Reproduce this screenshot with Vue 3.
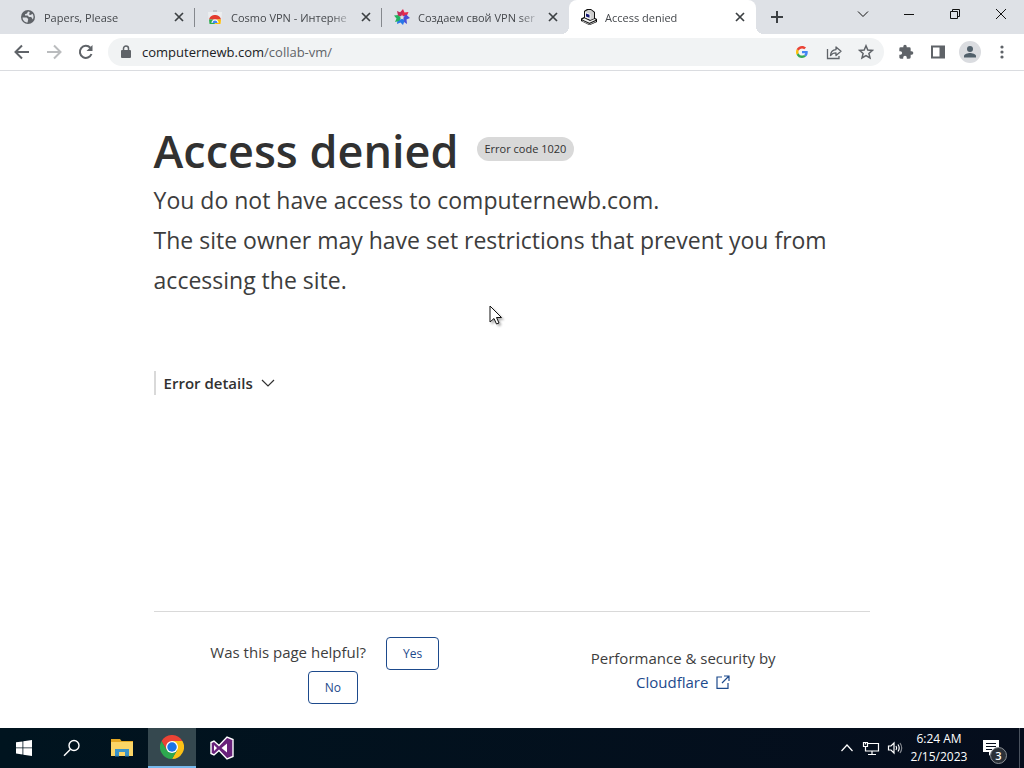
<script setup>
import { ref } from 'vue'

const tabs = [
  { id: 1, title: 'Papers, Please', icon: 'globe' },
  { id: 2, title: 'Cosmo VPN - Интерне', icon: 'store' },
  { id: 3, title: 'Создаем свой VPN ser', icon: 'star' },
  { id: 4, title: 'Access denied', icon: 'computer' }
]

const activeTab = ref(4)
const url = ref('computernewb.com/collab-vm/')
</script>

<template>
  <div class="desktop">
    <div class="browser">
      <!-- Tab strip -->
      <div class="tab-strip">
        <div
          v-for="t in tabs"
          :key="t.id"
          class="tab"
          :class="{ active: activeTab === t.id, last: t.id === 3 }"
          @click="activeTab = t.id"
        >
          <svg v-if="t.icon === 'globe'" class="favicon" viewBox="0 0 16 16">
            <circle cx="8" cy="8" r="7" fill="#5f6368" />
            <path d="M2.600 8.600h4l1.600 1.400-.6 3.600c-2.800 0-5-2.200-5-5zM8 2.500 7 4.400l-2 .8v1.400h2.600L9 8h2.200l1 1.600.6.800c.4-.8.7-1.500.7-2.400 0-1.200-.4-2.400-1-3.200L10.600 6 9 5.400l.8-2.400z" fill="#dee1e6" />
          </svg>
          <svg v-else-if="t.icon === 'store'" class="favicon" viewBox="0 0 16 16">
            <path d="M1 3h14l-1 12H2z" fill="#eceef0" />
            <path d="M6 2h4" stroke="#a5a8ac" />
            <path d="M2 10.500C3 7 5.500 6 8 6s5 1 6 4.500z" fill="#e33b2e" />
            <path d="M2 10.500h4L8 15H2.500z" fill="#2da94f" />
            <path d="M14 10.500h-4L8 15h5.500z" fill="#fdbd00" />
            <path d="M4.500 14a3.500 3.500 0 0 1 7 0z" fill="#fff" />
            <path d="M5.500 14a2.500 2.500 0 0 1 5 0z" fill="#4285f4" />
          </svg>
          <svg v-else-if="t.icon === 'star'" class="favicon" viewBox="0 0 16 16">
            <path d="M8 8 5.500 4 9 0l1.500 3.500 4-.5-2 4.500z" fill="#e8274b" />
            <path d="M8 8 12 5.500l4 3.500-3.500 1.500L13 15l-4.500-3z" fill="#4b4fd6" />
            <path d="m8 8 2.500 4-1.500 4-2.500-2.500L3 15l.5-4.500z" fill="#2878e8" />
            <path d="m8 8-3 4-4 1 1.500-3.500L0 6.500 4.500 6z" fill="#23b35f" />
            <path d="M8 8 4 6.500 3 2l3.500 1.500L9 1z" fill="#c12c5c" />
            <path d="m8 5.500.8 1.700 1.900.3-1.400 1.300.4 1.900L8 9.800l-1.700.9.4-1.900-1.400-1.300 1.900-.3z" fill="#dee1e6" />
          </svg>
          <svg v-else class="favicon" viewBox="0 0 16 16">
            <path d="m3 2 3-2h4l4 3v6l2 1v3l-7 3H8l-8-4V9.500L3 8z" fill="#111" />
            <path d="m4 2.500 3-1.500h3l3 2.500v6L9.500 11 4 8.500z" fill="#cfcfcf" />
            <path d="m4 3 5.500 2v5.500L4 8.500z" fill="#f4f4f4" />
            <path d="m5 4.500 3.500 1.300v3L5 7.500z" fill="#171a75" />
            <path d="m1 10.500 2.500-1.200L9 12l4.500-2 1.500.8-6.500 3z" fill="#f4f4f4" />
            <path d="m1 11.800 7.500 3.500 6.500-3" stroke="#aaa" fill="none" />
          </svg>
          <span class="tab-title">{{ t.title }}</span>
          <button class="tab-close" :aria-label="`Close ${t.title}`">
            <svg width="16" height="16" viewBox="0 0 16 16">
              <path d="m4 4 8 8M12 4l-8 8" stroke="#3c4043" stroke-width="1.700" />
            </svg>
          </button>
        </div>
        <button class="new-tab" aria-label="New tab">
          <svg width="16" height="16" viewBox="0 0 16 16">
            <path d="M8 2v12M2 8h12" stroke="#3c4043" stroke-width="2" />
          </svg>
        </button>
        <div class="window-buttons">
          <button aria-label="Search tabs">
            <svg width="12" height="12" viewBox="0 0 12 12"><path d="m1 3.500 5 5 5-5" /></svg>
          </button>
          <button aria-label="Minimize">
            <svg width="12" height="12" viewBox="0 0 12 12"><path d="M1 6.500h10" /></svg>
          </button>
          <button aria-label="Restore">
            <svg width="12" height="12" viewBox="0 0 12 12">
              <path d="M1.500 3.500h7v7h-7zM3.500 3.500v-2h7v7h-2" />
            </svg>
          </button>
          <button aria-label="Close">
            <svg width="12" height="12" viewBox="0 0 12 12"><path d="m1 1 10 10M11 1 1 11" /></svg>
          </button>
        </div>
      </div>

      <!-- Toolbar -->
      <div class="toolbar">
        <button class="tool" aria-label="Back">
          <svg width="16" height="16" viewBox="0 0 16 16">
            <path d="M15 8H2M8 1.500 1.500 8 8 14.500" fill="none" stroke="#5f6368" stroke-width="2" />
          </svg>
        </button>
        <button class="tool" aria-label="Forward">
          <svg width="16" height="16" viewBox="0 0 16 16">
            <path d="M1 8h13M8 1.500 14.500 8 8 14.500" fill="none" stroke="#babcbe" stroke-width="2" />
          </svg>
        </button>
        <button class="tool" aria-label="Reload">
          <svg width="16" height="16" viewBox="0 0 16 16">
            <path d="M13.500 10A6 6 0 1 1 12.300 3.800" fill="none" stroke="#5f6368" stroke-width="2" />
            <path d="M14.500 1v6h-6z" fill="#5f6368" />
          </svg>
        </button>
        <div class="omnibox">
          <svg class="lock" width="12" height="14" viewBox="0 0 12 14">
            <path d="M2 5h8q1 0 1 1v6q0 1-1 1H2q-1 0-1-1V6q0-1 1-1z" fill="#5f6368" />
            <path d="M3.500 6V3.500a2.500 2.500 0 0 1 5 0V6" fill="none" stroke="#5f6368" stroke-width="1.500" />
          </svg>
          <div class="address">
            <input v-model="url" class="url" aria-label="Address bar" />
            <span class="url-text" aria-hidden="true">computernewb.com<span class="path">/collab-vm/</span></span>
          </div>
          <button class="tool" aria-label="Search with Google">
            <svg width="12" height="12" viewBox="0 0 48 48">
              <path fill="#ea4335" d="M24 9.500c3.540 0 6.710 1.220 9.210 3.600l6.850-6.850C35.900 2.380 30.470 0 24 0 14.620 0 6.510 5.380 2.560 13.220l7.980 6.190C12.430 13.720 17.740 9.500 24 9.500z" />
              <path fill="#4285f4" d="M46.980 24.550c0-1.570-.15-3.090-.38-4.550H24v9.020h12.940c-.58 2.960-2.260 5.480-4.780 7.180l7.730 6c4.510-4.180 7.090-10.360 7.090-17.650z" />
              <path fill="#fbbc05" d="M10.530 28.590c-.48-1.450-.76-2.990-.76-4.590s.27-3.140.76-4.590l-7.980-6.190C.92 16.460 0 20.120 0 24s.92 7.540 2.560 10.780l7.970-6.190z" />
              <path fill="#34a853" d="M24 48c6.480 0 11.930-2.130 15.890-5.810l-7.730-6c-2.150 1.450-4.920 2.300-8.160 2.300-6.260 0-11.570-4.220-13.470-9.910l-7.980 6.190C6.510 42.620 14.620 48 24 48z" />
            </svg>
          </button>
          <button class="tool" aria-label="Share">
            <svg width="16" height="16" viewBox="0 0 16 16" fill="none" stroke="#5f6368" stroke-width="1.300">
              <path d="M1.500 5v9.500H13V12" />
              <path d="M4.500 11.500c.3-4 2.500-5.700 5.500-5.900V3l5 4.300-5 4.200V8.800c-2.500 0-4 .6-5.500 2.700z" stroke-linejoin="round" />
            </svg>
          </button>
          <button class="tool" aria-label="Bookmark this tab">
            <svg width="16" height="16" viewBox="0 0 16 16">
              <path d="m8 1.800 1.800 4.200 4.600.4-3.500 3 1.100 4.500L8 11.500l-4 2.400 1.100-4.500-3.500-3 4.600-.4z" fill="none" stroke="#5f6368" stroke-width="1.500" />
            </svg>
          </button>
        </div>
        <div class="extensions">
          <button class="tool" aria-label="Extensions">
            <svg width="16" height="16" viewBox="0 0 24 24">
              <path d="M20.500 11H19V7a2 2 0 0 0-2-2h-4V3.500a2.500 2.500 0 0 0-5 0V5H4a2 2 0 0 0-2 2v3.800h1.500a2.700 2.700 0 0 1 0 5.400H2V20c0 1.100.9 2 2 2h3.800v-1.500a2.700 2.700 0 0 1 5.400 0V22H17a2 2 0 0 0 2-2v-4h1.500a2.500 2.500 0 0 0 0-5z" fill="#5f6368" />
            </svg>
          </button>
          <button class="tool" aria-label="Side panel">
            <svg width="16" height="16" viewBox="0 0 16 16">
              <path d="M2 2.500h12v11H2z" fill="none" stroke="#5f6368" stroke-width="2" />
              <path d="M9.500 2H15v12H9.500z" fill="#5f6368" />
            </svg>
          </button>
          <button class="tool" aria-label="Profile">
            <svg width="22" height="22" viewBox="0 0 22 22">
              <circle cx="11" cy="11" r="11" fill="#dadce0" />
              <circle cx="11" cy="8" r="3" fill="#51606b" />
              <path d="M5 16.500V15c0-2 4-3 6-3s6 1 6 3v1.500z" fill="#51606b" />
            </svg>
          </button>
          <button class="tool" aria-label="Menu">
            <svg width="16" height="16" viewBox="0 0 16 16" fill="#5f6368">
              <circle cx="8" cy="3" r="1.600" />
              <circle cx="8" cy="8" r="1.600" />
              <circle cx="8" cy="13" r="1.600" />
            </svg>
          </button>
        </div>
      </div>

      <!-- Error page -->
      <main class="page">
        <div class="page-body">
          <header class="heading">
            <h1>Access denied</h1>
            <span class="code">Error code 1020</span>
          </header>
          <p class="lead">You do not have access to computernewb.com.</p>
          <p class="lead">The site owner may have set restrictions that prevent you from accessing the site.</p>
          <button class="details">
            Error details
            <svg width="14" height="14" viewBox="0 0 14 14">
              <path d="m1 4 6 6 6-6" fill="none" stroke="#313131" stroke-width="1.200" />
            </svg>
          </button>
          <footer class="page-footer">
            <div class="feedback">
              <span>Was this page helpful?</span>
              <button class="btn">Yes</button>
              <button class="btn">No</button>
            </div>
            <div class="credit">
              <span>Performance &amp; security by</span>
              <a href="#">
                Cloudflare
                <svg width="14" height="14" viewBox="0 0 14 14" fill="none" stroke="#1d4a8c" stroke-width="1.200">
                  <path d="M6 2H1v11.300h11V8M8 1h5v5M13 1 6 8" />
                </svg>
              </a>
            </div>
          </footer>
        </div>
      </main>
    </div>

    <!-- Taskbar -->
    <div class="taskbar">
      <button class="task" aria-label="Start">
        <svg width="16" height="16" viewBox="0 0 16 16" fill="#fff">
          <path d="M0 2.300 6.500 1.400v6.100H0zM7.300 1.300 16 0v7.500H7.300zM0 8.300h6.500v6.200L0 13.600zM7.300 8.300H16V16l-8.700-1.300z" />
        </svg>
      </button>
      <button class="task" aria-label="Search">
        <svg width="18" height="18" viewBox="0 0 18 18" fill="none" stroke="#fff" stroke-width="1.400">
          <circle cx="11" cy="6.500" r="5" />
          <path d="M7.500 10.200 1 16.700" />
        </svg>
      </button>
      <div class="apps">
        <button class="task" aria-label="File Explorer">
          <svg width="22" height="20" viewBox="0 0 22 20">
            <path d="M0 1h9l1.500 2H22v15H0z" fill="#e5a823" />
            <path d="M0 4h22v14H0z" fill="#fbd566" />
            <path d="M4 11h14v7H4z" fill="#3a93c8" />
            <path d="M8 14h6v4H8z" fill="#fbd566" />
            <path d="M4 17.500h4v1H4zM14 17.500h4v1h-4z" fill="#2f7fb5" />
          </svg>
        </button>
        <button class="task running" aria-label="Google Chrome">
          <svg width="24" height="24" viewBox="0 0 48 48">
            <path d="M24 24V12h20.800A24 24 0 0 1 24 48l10.400-18z" fill="#fbc116" />
            <path d="M24 24l10.400 6L24 48A24 24 0 0 1 3.200 12l10.400 18z" fill="#2da94f" />
            <path d="M24 12h20.800A24 24 0 0 0 3.200 12l10.400 18z" fill="#ea4335" />
            <circle cx="24" cy="24" r="12" fill="#fff" />
            <circle cx="24" cy="24" r="9.500" fill="#1a73e8" />
          </svg>
        </button>
        <button class="task" aria-label="Visual Studio">
          <svg width="24" height="24" viewBox="0 0 24 24">
            <path d="M1 6.500 4 5l5 4.500L17 1l6 2.500v17L17 23l-8-8.500L4 19l-3-1.500z" fill="#68217a" stroke="#fff" stroke-width="1.400" />
            <path d="M4 9v6l3-3zM17 7.500v9L11.500 12z" fill="#fff" />
          </svg>
        </button>
      </div>
      <div class="tray">
        <button aria-label="Show hidden icons">
          <svg width="16" height="16" viewBox="0 0 16 16"><path d="m2.500 11 5.500-6 5.500 6" /></svg>
        </button>
        <button aria-label="Network">
          <svg width="18" height="16" viewBox="0 0 18 16">
            <path d="M6 3.500h10.500v7.500H3.500V7M10 11v3.500M6 14.500h8M1.500 2.500h4v4h-4zM3.500 2.500v2" />
          </svg>
        </button>
        <button aria-label="Volume">
          <svg width="16" height="16" viewBox="0 0 16 16">
            <path d="M1.500 6H4l3-3v10l-3-3H1.500z" />
            <path d="M9 6q1.400 2 0 4M11 4.500q2.400 3.500 0 7" />
            <path d="M13 3q3.400 5 0 10" opacity=".5" />
          </svg>
        </button>
      </div>
      <button class="clock">
        <span>6:24 AM</span>
        <span>2/15/2023</span>
      </button>
      <button class="notify" aria-label="Notifications">
        <svg width="18" height="18" viewBox="0 0 18 18">
          <path d="M1 1h16v12h-7l-3 4v-4H1z" fill="#fff" />
          <path d="M4 4.500h10M4 7.500h10M4 10.500h6" stroke="#050d1c" />
        </svg>
        <span class="count">3</span>
      </button>
      <button class="show-desktop" aria-label="Show desktop"></button>
    </div>

    <svg class="cursor" width="20" height="26" viewBox="0 0 20 26">
      <path d="M1 1v16l4-3.500L7.500 19l2.500-1-2.500-5.500h5z" fill="#fff" stroke="#111" />
    </svg>
  </div>
</template>

<style>
html,
body,
#app {
  height: 100%;
}

body {
  margin: 0;
}
</style>

<style scoped>
.desktop {
  position: relative;
  display: flex;
  flex-direction: column;
  min-height: 100%;
  font-family: 'Open Sans', 'Noto Sans', sans-serif;
  background: #fff;
}

.desktop * {
  box-sizing: border-box;
}

button {
  display: flex;
  align-items: center;
  justify-content: center;
  padding: 0;
  border: none;
  background: none;
  font-family: inherit;
  color: inherit;
}

.browser {
  flex: 1;
  display: flex;
  flex-direction: column;
}

/* Tab strip */
.tab-strip {
  display: flex;
  height: 34px;
  padding-left: 8px;
  background: #dee1e6;
}

.tab {
  position: relative;
  flex: 0 1 187px;
  min-width: 0;
  display: flex;
  align-items: center;
  gap: 8px;
  padding: 0 8px 0 12px;
  font-size: 11px;
  color: #45484c;
}

.tab:not(.active):not(.last)::after {
  content: '';
  position: absolute;
  right: 0;
  top: 8px;
  width: 1px;
  height: 19px;
  background: #85888d;
}

.tab.active {
  background: #fff;
  border-radius: 8px 8px 0 0;
}

/* Curved feet of the active tab */
.tab.active::before,
.tab.active::after {
  content: '';
  position: absolute;
  bottom: 0;
  width: 8px;
  height: 8px;
}

.tab.active::before {
  left: -8px;
  background: radial-gradient(circle at 0 0, transparent 8px, #fff 8px);
}

.tab.active::after {
  right: -8px;
  background: radial-gradient(circle at 100% 0, transparent 8px, #fff 8px);
}

.favicon {
  flex: none;
  width: 16px;
  height: 16px;
}

.tab-title {
  flex: 1;
  margin-right: -4px;
  overflow: hidden;
  white-space: nowrap;
  mask-image: linear-gradient(90deg, #000 82%, transparent);
}

.tab-close {
  flex: none;
}

.new-tab {
  width: 28px;
  margin-left: 7px;
}

.window-buttons {
  display: flex;
  height: 28px;
  margin-left: auto;
}

.window-buttons button {
  width: 46px;
}

.window-buttons svg {
  fill: none;
  stroke: #111;
}

/* Toolbar */
.toolbar {
  display: flex;
  align-items: center;
  height: 37px;
  padding: 0 6px;
  background: #fff;
  border-bottom: 1px solid #dadce0;
}

.tool {
  flex: none;
  width: 32px;
  height: 28px;
}

.omnibox {
  flex: 1;
  display: flex;
  align-items: center;
  height: 28px;
  margin: 0 6px;
  padding: 0 2px 0 12px;
  border-radius: 14px;
  background: #f1f3f4;
}

.lock {
  flex: none;
}

.address {
  position: relative;
  flex: 1;
  display: flex;
  align-items: center;
  margin-left: 10px;
  font-size: 13px;
  line-height: 20px;
}

.url {
  width: 100%;
  padding: 0;
  border: none;
  outline: none;
  background: none;
  font: inherit;
  color: transparent;
  caret-color: #202124;
}

.url-text {
  position: absolute;
  left: 0;
  color: #202124;
  pointer-events: none;
}

.path {
  color: #5f6368;
}

.extensions {
  display: flex;
}

/* Error page */
.page {
  flex: 1;
  display: flex;
  flex-direction: column;
  color: #313131;
}

.page-body {
  flex: 1;
  display: flex;
  flex-direction: column;
  width: 70%;
  margin: 0 auto;
  padding-top: 51px;
}

.heading {
  display: flex;
  align-items: center;
  gap: 18px;
}

h1 {
  margin: 0;
  font-size: 45px;
  font-weight: 600;
  line-height: 58px;
}

.code {
  margin-bottom: 4px;
  padding: 0 8px;
  border-radius: 12px;
  background: #d9d9d9;
  font-size: 11px;
  line-height: 24px;
}

.lead {
  margin: 0;
  font-size: 23px;
  line-height: 40px;
  color: #3d3d3d;
}

.details {
  align-self: flex-start;
  gap: 8px;
  margin-top: 71px;
  padding-left: 8px;
  border-left: 2px solid #d9d9d9;
  font-size: 15px;
  font-weight: 600;
  line-height: 24px;
}

.page-footer {
  display: grid;
  grid-template-columns: 1fr 1fr;
  margin-top: auto;
  padding: 24px 0;
  border-top: 1px solid #d9d9d9;
  font-size: 15px;
  line-height: 24px;
  color: #3d3d3d;
}

.feedback {
  display: flex;
  flex-wrap: wrap;
  align-items: baseline;
  justify-content: center;
  row-gap: 1px;
  padding: 1px 48px 0;
}

.feedback span {
  margin-right: 20px;
}

.btn {
  height: 33px;
  padding: 0 16px;
  border: 1px solid #1d4a8c;
  border-radius: 4px;
  font-size: 12px;
  color: #1d4a8c;
}

.btn:first-of-type {
  margin-right: 16px;
}

.credit {
  display: flex;
  flex-direction: column;
  align-items: center;
  justify-content: center;
  padding-right: 16px;
}

.credit a {
  display: flex;
  align-items: center;
  gap: 8px;
  color: #1d4a8c;
  text-decoration: none;
}

/* Taskbar */
.taskbar {
  display: flex;
  height: 40px;
  background: linear-gradient(90deg, #00141f, #050d1c);
  color: #fff;
}

.task {
  width: 48px;
  height: 40px;
}

.task.running {
  background: #35484f;
  border-bottom: 2px solid #76b9ed;
}

.apps {
  display: flex;
  gap: 2px;
  margin-left: 2px;
}

.tray {
  display: flex;
  margin-left: auto;
}

.tray button {
  width: 24px;
}

.tray svg {
  fill: none;
  stroke: #fff;
  stroke-width: 1.2;
}

.clock {
  flex-direction: column;
  width: 64px;
  font-size: 12px;
  line-height: 18px;
}

.notify {
  position: relative;
  width: 48px;
  padding-right: 8px;
}

.count {
  position: absolute;
  left: 19px;
  top: 19px;
  width: 17px;
  height: 17px;
  border: 1px solid #8b9096;
  border-radius: 50%;
  background: #2b3138;
  font-size: 11px;
  font-weight: 600;
  line-height: 15px;
  text-align: center;
}

.show-desktop {
  width: 5px;
  border-left: 1px solid #4a525e;
}

/* Mouse pointer over the page */
.cursor {
  position: absolute;
  left: 489px;
  top: 305px;
  filter: drop-shadow(2px 2px 1px rgba(0, 0, 0, 0.3));
  pointer-events: none;
}
</style>
